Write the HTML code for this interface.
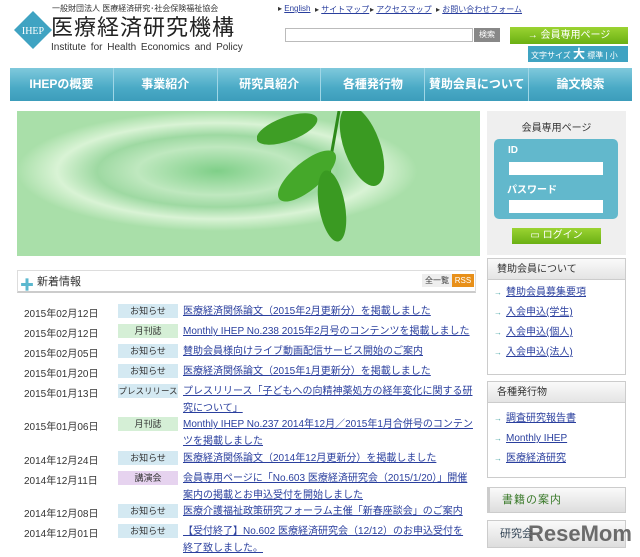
<!DOCTYPE html>
<html><head><meta charset="utf-8"><style>
*{margin:0;padding:0;box-sizing:border-box}
body{width:640px;height:554px;overflow:hidden;background:#fff;font-family:"Liberation Sans","Noto Sans CJK JP",sans-serif;position:relative;color:#333}
.a{position:absolute}
a{color:#2a3f9e;text-decoration:underline}
.nav{left:10px;top:68px;width:622px;height:33px;background:linear-gradient(#7fc9dc,#4aaac6 60%,#3c9dbb);display:flex}
.nav div{flex:1;color:#fff;font-weight:bold;font-size:12px;text-align:center;line-height:33px;border-right:1px solid #9fd6e6;white-space:nowrap}
.nav div:last-child{border:none}
.row{position:absolute;left:24px;font-size:10px;width:450px}
.row .d{position:absolute;left:0;top:0}
.row .t{position:absolute;left:94px;top:-1px;width:60px;height:14px;font-size:9px;text-align:center;line-height:14px;background:#d4e9f2;white-space:nowrap;overflow:hidden}
.row .l{position:absolute;left:159px;top:0;width:290px;line-height:17px;margin-top:-2px}
.sb{position:absolute;left:487px;width:139px;border:1px solid #ccc;background:#fff}
.sb h3{font-weight:normal;font-size:10px;height:21px;line-height:21px;padding-left:9px;background:linear-gradient(#fafafa,#e4e4e4);border-bottom:1px solid #ccc;color:#333}
.li{position:absolute;left:494px;font-size:10px;line-height:12px;white-space:nowrap}
.li i{font-style:normal;color:#5aa;font-size:8px;margin-right:4px}
</style></head><body>
<svg class="a" style="left:14px;top:11px" width="38" height="38"><polygon points="19,0 38,19 19,38 0,19" fill="#3fa3c2"/><text x="19" y="23" font-size="10" fill="#fff" text-anchor="middle" font-family="Liberation Serif">IHEP</text></svg>
<div class="a" style="left:52px;top:3px;font-size:8px;color:#333;white-space:nowrap">一般財団法人 医療経済研究･社会保険福祉協会</div>
<div class="a" style="left:51px;top:15px;font-size:22px;letter-spacing:1px;color:#222;line-height:26px;white-space:nowrap">医療経済研究機構</div>
<div class="a" style="left:51px;top:42px;font-size:10px;color:#333;word-spacing:2px">Institute for Health Economics and Policy</div>
<div class="a" style="left:278px;top:4px;font-size:8px;width:360px">
<span style="position:absolute;left:0">▸ <a>English</a></span><span style="position:absolute;left:37px">▸ <a>サイトマップ</a></span><span style="position:absolute;left:92px">▸ <a>アクセスマップ</a></span><span style="position:absolute;left:158px">▸ <a>お問い合わせフォーム</a></span></div>
<div class="a" style="left:285px;top:28px;width:188px;height:14px;border:1px solid #bbb"></div>
<div class="a" style="left:474px;top:28px;width:26px;height:14px;background:#888;color:#fff;font-size:8px;text-align:center;line-height:14px">検索</div>
<div class="a" style="left:510px;top:27px;width:118px;height:17px;background:linear-gradient(#9bd332,#6ab013);color:#fff;font-size:10px;text-align:center;line-height:17px">→ 会員専用ページ</div>
<div class="a" style="left:528px;top:46px;width:100px;height:16px;background:#3fa3c2;color:#fff;font-size:8px;line-height:16px;padding-left:3px;white-space:nowrap">文字サイズ <b style="font-size:12px">大</b> 標準 | 小</div>
<div class="a nav"><div>IHEPの概要</div><div>事業紹介</div><div>研究員紹介</div><div>各種発行物</div><div>賛助会員について</div><div>論文検索</div></div>
<div class="a" style="left:17px;top:111px;width:463px;height:145px;background:radial-gradient(ellipse 200px 60px at 200px 60px,#7fcf88,#bfe8bf 40%,#9ed9a2 60%,#d9f3d5 80%,#a9dfa9)"></div>
<svg class="a" style="left:257px;top:111px" width="140" height="145"><path d="M82 0 L75 40 L70 80 L72 120" stroke="#2d8a1a" stroke-width="3" fill="none"/><ellipse cx="30" cy="18" rx="32" ry="12" fill="#3e9e25" transform="rotate(-20 30 18)"/><ellipse cx="105" cy="35" rx="18" ry="42" fill="#3a9a22" transform="rotate(-20 105 35)"/><ellipse cx="50" cy="65" rx="14" ry="36" fill="#45a82a" transform="rotate(50 50 65)"/><ellipse cx="75" cy="95" rx="13" ry="36" fill="#3a9a22" transform="rotate(-10 75 95)"/></svg>
<div class="a" style="left:487px;top:111px;width:139px;height:144px;background:#efefef"></div>
<div class="a" style="left:487px;top:119px;width:139px;text-align:center;font-size:10px">会員専用ページ</div>
<div class="a" style="left:494px;top:139px;width:124px;height:80px;background:#62b8cc;border-radius:5px"></div>
<div class="a" style="left:508px;top:145px;color:#fff;font-size:10px;font-weight:bold">ID</div>
<div class="a" style="left:509px;top:162px;width:94px;height:13px;background:#fff"></div>
<div class="a" style="left:507px;top:181px;color:#fff;font-size:10px;font-weight:bold">パスワード</div>
<div class="a" style="left:509px;top:200px;width:94px;height:13px;background:#fff"></div>
<div class="a" style="left:512px;top:228px;width:89px;height:16px;background:linear-gradient(#9bd332,#6ab013);color:#fff;font-size:10px;text-align:center;line-height:16px">▭ ログイン</div>
<div class="a" style="left:17px;top:270px;width:459px;height:23px;border:1px solid #ddd;border-bottom:2px solid #ccc"></div>
<div class="a" style="left:20px;top:275px;color:#5bb8cf;font-size:14px;font-weight:bold">✚</div>
<div class="a" style="left:37px;top:273px;font-size:11px;color:#333">新着情報</div>
<div class="a" style="left:422px;top:274px;width:30px;height:13px;background:#eee;font-size:8px;line-height:13px;text-align:center">全一覧</div>
<div class="a" style="left:452px;top:274px;width:22px;height:13px;background:#e8901a;color:#fff;font-size:8px;line-height:13px;text-align:center">RSS</div>
<div class="row" style="top:305px"><span class="d">2015年02月12日</span><span class="t">お知らせ</span><a class="l">医療経済関係論文（2015年2月更新分）を掲載しました</a></div>
<div class="row" style="top:325px"><span class="d">2015年02月12日</span><span class="t" style="background:#d5efd6">月刊誌</span><a class="l">Monthly IHEP No.238 2015年2月号のコンテンツを掲載しました</a></div>
<div class="row" style="top:345px"><span class="d">2015年02月05日</span><span class="t">お知らせ</span><a class="l">賛助会員様向けライブ動画配信サービス開始のご案内</a></div>
<div class="row" style="top:365px"><span class="d">2015年01月20日</span><span class="t">お知らせ</span><a class="l">医療経済関係論文（2015年1月更新分）を掲載しました</a></div>
<div class="row" style="top:385px"><span class="d">2015年01月13日</span><span class="t" style="font-size:8.5px">プレスリリース</span><a class="l">プレスリリース「子どもへの向精神薬処方の経年変化に関する研究について」</a></div>
<div class="row" style="top:418px"><span class="d">2015年01月06日</span><span class="t" style="background:#d5efd6">月刊誌</span><a class="l">Monthly IHEP No.237 2014年12月／2015年1月合併号のコンテンツを掲載しました</a></div>
<div class="row" style="top:452px"><span class="d">2014年12月24日</span><span class="t">お知らせ</span><a class="l">医療経済関係論文（2014年12月更新分）を掲載しました</a></div>
<div class="row" style="top:472px"><span class="d">2014年12月11日</span><span class="t" style="background:#e6d3ef">講演会</span><a class="l">会員専用ページに「No.603 医療経済研究会（2015/1/20）」開催案内の掲載とお申込受付を開始しました</a></div>
<div class="row" style="top:505px"><span class="d">2014年12月08日</span><span class="t">お知らせ</span><a class="l">医療介護福祉政策研究フォーラム主催「新春座談会」のご案内</a></div>
<div class="row" style="top:525px"><span class="d">2014年12月01日</span><span class="t">お知らせ</span><a class="l">【受付終了】No.602 医療経済研究会（12/12）のお申込受付を終了致しました。</a></div>
<div class="sb" style="top:258px;height:117px"><h3>賛助会員について</h3></div>
<div class="li" style="top:287px"><i>→</i><a>賛助会員募集要項</a></div>
<div class="li" style="top:307px"><i>→</i><a>入会申込(学生)</a></div>
<div class="li" style="top:327px"><i>→</i><a>入会申込(個人)</a></div>
<div class="li" style="top:347px"><i>→</i><a>入会申込(法人)</a></div>
<div class="sb" style="top:381px;height:97px"><h3>各種発行物</h3></div>
<div class="li" style="top:413px"><i>→</i><a>調査研究報告書</a></div>
<div class="li" style="top:433px"><i>→</i><a>Monthly IHEP</a></div>
<div class="li" style="top:453px"><i>→</i><a>医療経済研究</a></div>
<div class="sb" style="top:487px;height:26px;background:linear-gradient(#fafafa,#ddd);font-size:11px;line-height:24px;padding-left:12px;border-left:3px solid #ccc;color:#3a7a2a;letter-spacing:1px">書籍の案内</div>
<div class="sb" style="top:520px;height:28px;background:linear-gradient(#fafafa,#ddd);font-size:11px;line-height:26px;padding-left:12px;color:#345">研究会</div>
<div class="a" style="left:528px;top:521px;font-size:22px;font-weight:bold;color:#555;opacity:.85">ReseMom</div>
</body></html>
